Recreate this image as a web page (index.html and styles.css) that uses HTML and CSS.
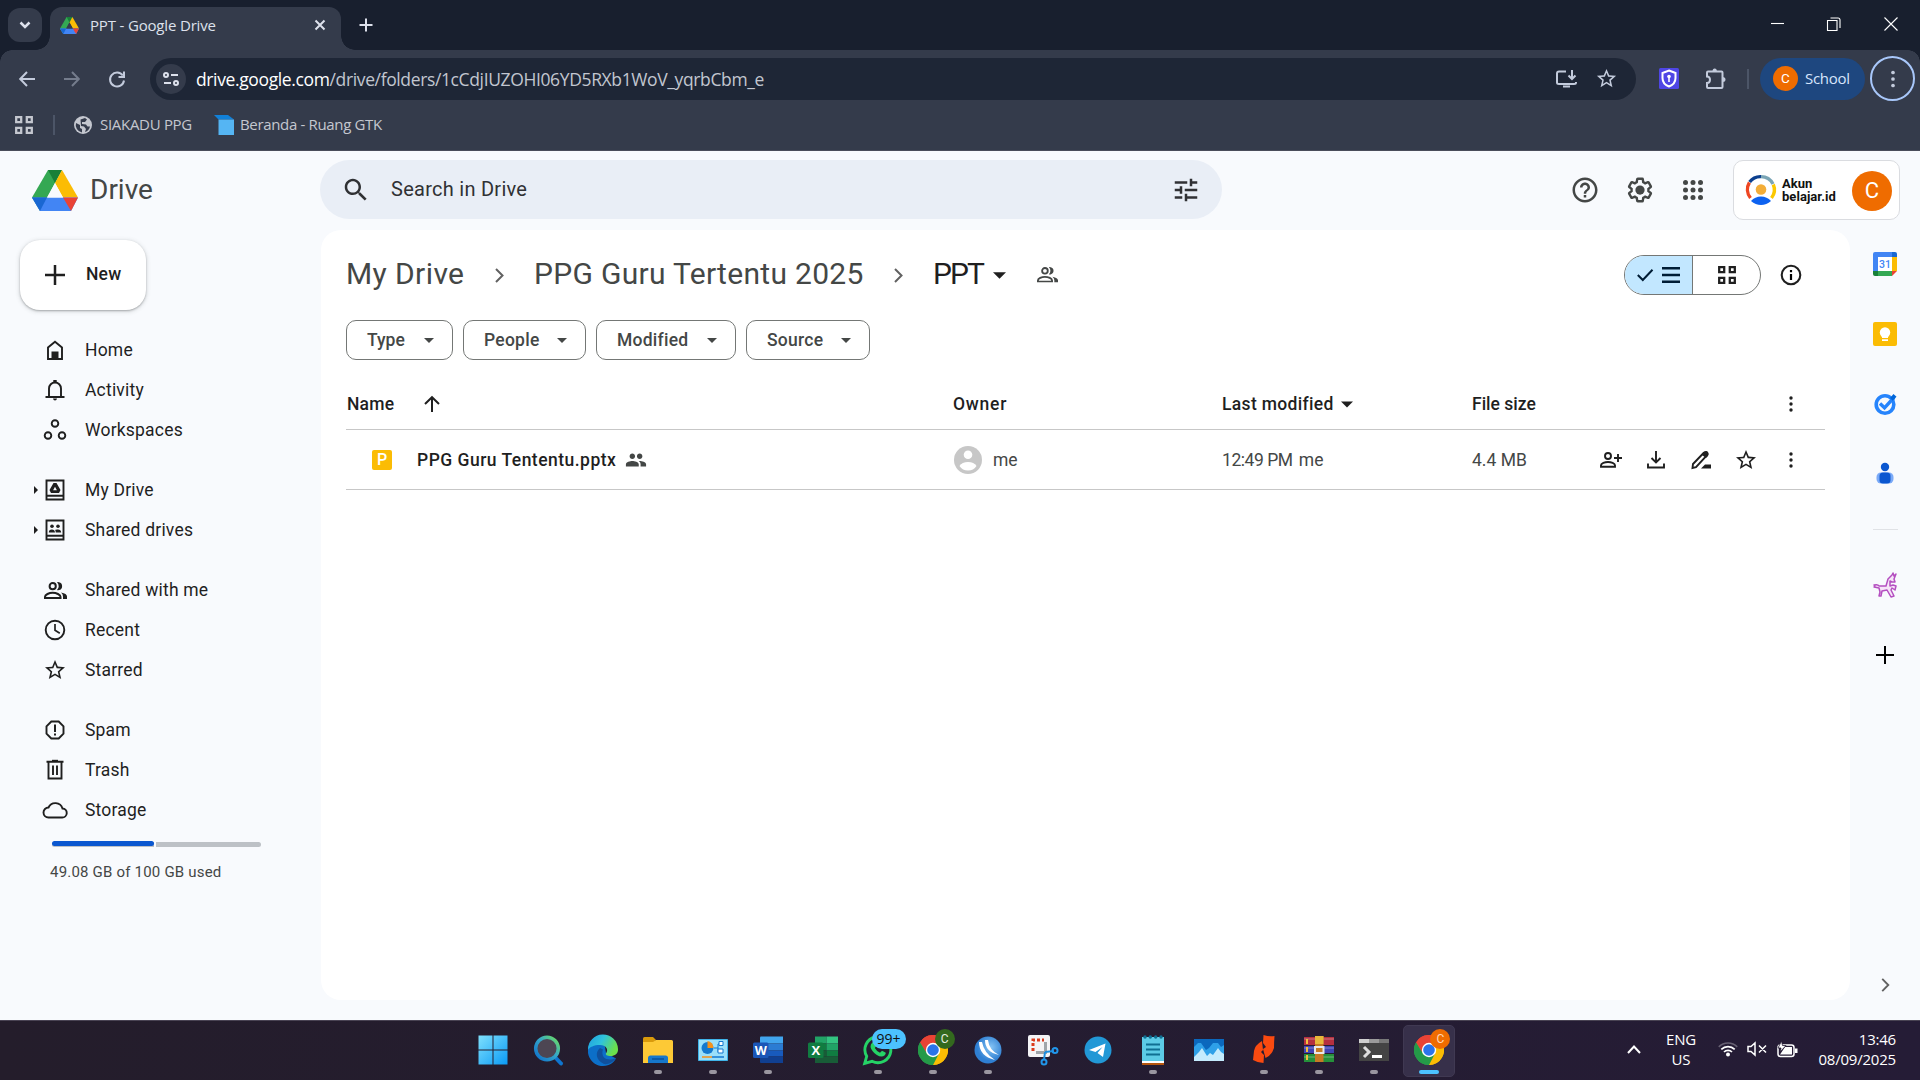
FILE: index.html
```html
<!DOCTYPE html>
<html lang="en">
<head>
<meta charset="utf-8">
<title>PPT - Google Drive</title>
<link rel="stylesheet" href="styles.css">
</head>
<body>
<svg class="defs" aria-hidden="true">
  <symbol id="drive" viewBox="0 0 46 41">
    <path d="M16 0h14L8 41 0 27.500z" fill="#34a853"/>
    <path d="M16 0h14l-7 13z" fill="#188038"/>
    <path d="M30 0l16 27.500H31L23 13z" fill="#fbbc04"/>
    <path d="M0 27.500h46L39 41H8z" fill="#4285f4"/>
    <path d="M0 27.500h15L8 41z" fill="#1967d2"/>
    <path d="M31 27.500h15L39 41z" fill="#ea4335"/>
    <path d="M23 13l8 14.500H15z" fill="var(--hole)"/>
  </symbol>
  <symbol id="star" viewBox="0 0 24 24"><path d="M22 9.240l-7.190-.62L12 2 9.190 8.630 2 9.240l5.460 4.730L5.820 21 12 17.270 18.180 21l-1.630-7.030L22 9.240zM12 15.400l-3.760 2.270 1-4.280-3.320-2.880 4.380-.38L12 6.100l1.710 4.040 4.380.38-3.320 2.880 1 4.280L12 15.400z"/></symbol>
  <symbol id="people" viewBox="0 0 23 17"><g fill="none" stroke="currentColor" stroke-width="2"><circle cx="8.700" cy="4.200" r="3.100"/><path d="M1 16v-1.300c0-2 4-3.900 7.700-3.900s7.800 1.900 7.800 3.900V16z"/></g><path d="M13 .3q1-.4 2 0a4 4 0 0 1 0 7.800q-1 .3-2-.1 1.700-1.500 1.700-3.800T13 .3zM17 10.600q6 1.200 6 4V17h-4v-2.600q0-2-2-3.800z" fill="currentColor"/></symbol>
  <symbol id="people-fill" viewBox="0 0 24 24"><path d="M16 11c1.660 0 2.990-1.340 2.990-3S17.660 5 16 5c-1.660 0-3 1.340-3 3s1.340 3 3 3zm-8 0c1.660 0 2.990-1.340 2.990-3S9.660 5 8 5C6.340 5 5 6.340 5 8s1.340 3 3 3zm0 2c-2.330 0-7 1.170-7 3.500V19h14v-2.500c0-2.330-4.670-3.500-7-3.500zm8 0c-.29 0-.62.02-.97.05 1.160.84 1.970 1.970 1.970 3.450V19h6v-2.500c0-2.330-4.670-3.500-7-3.500z"/></symbol>
  <symbol id="dots" viewBox="0 0 24 24"><circle cx="12" cy="6" r="1.700"/><circle cx="12" cy="12" r="1.700"/><circle cx="12" cy="18" r="1.700"/></symbol>
  <symbol id="grid" viewBox="0 0 18 18"><g fill="none" stroke="currentColor" stroke-width="2.300"><path d="M1.200 1.200h5v5h-5zM11.800 1.200h5v5h-5zM1.200 11.800h5v5h-5zM11.800 11.800h5v5h-5z"/></g></symbol>
  <symbol id="caret" viewBox="0 0 10 5"><path d="M0 0h10L5 5z"/></symbol>
  <symbol id="chrome" viewBox="0 0 30 30">
    <path d="M15 15L2 7.500A15 15 0 0 1 28 7.500z" fill="#ea4335"/>
    <path d="M15 15L28 7.500A15 15 0 0 1 15 30z" fill="#fbbc04"/>
    <path d="M15 15V30A15 15 0 0 1 2 7.500z" fill="#34a853"/>
    <path d="M15 8H28.300A15 15 0 0 1 15 30l6-11z" fill="#fbbc04"/>
    <path d="M2 7.500A15 15 0 0 1 28.300 8H15l-7 9z" fill="#ea4335"/>
    <path d="M2 7.500l7 12 12-1-6 11.500A15 15 0 0 1 2 7.500z" fill="#249a48"/>
    <circle cx="15" cy="15" r="7.200" fill="#fff"/><circle cx="15" cy="15" r="5.800" fill="#2b74ea"/>
  </symbol>
</svg>

<div class="tabstrip">
  <div class="tab-search"><svg width="12" height="8" viewBox="0 0 12 8" class="ln w25"><path d="M1.500 1.500L6 6l4.500-4.500"/></svg></div>
  <div class="tab">
    <svg class="tab-logo"><use href="#drive"/></svg>
    <span class="tab-title">PPT - Google Drive</span>
    <svg class="ln w2 tab-x" width="12" height="12" viewBox="0 0 12 12"><path d="M1.500 1.500l9 9M10.500 1.500l-9 9"/></svg>
  </div>
  <svg class="ln w2 newtab" width="14" height="14" viewBox="0 0 14 14"><path d="M7 .5v13M.5 7h13"/></svg>
  <div class="winbtns">
    <svg width="14" height="14" viewBox="0 0 14 14"><path d="M1 6.500h13"/></svg>
    <svg width="14" height="14" viewBox="0 0 14 14"><path d="M.5 3.500h9.500v10h-9.500zM3.500 1h7.500q2 0 2 2v8"/></svg>
    <svg width="14" height="14" viewBox="0 0 14 14"><path d="M.5.5l13 13M13.500.5l-13 13"/></svg>
  </div>
</div>

<div class="toolbar">
  <div class="nav">
    <svg class="ln w2" width="16" height="16" viewBox="0 0 16 16"><path d="M16 8H1.500M8 1L1.200 8 8 15"/></svg>
    <svg class="ln w2 off" width="16" height="16" viewBox="0 0 16 16"><path d="M0 8h14.500M8 1l6.800 7L8 15"/></svg>
    <svg class="ln w2" width="16" height="16" viewBox="0 0 16 16"><path d="M13.800 4.500A7 7 0 1 0 15 9.500M15 .5v5.500H9.500"/></svg>
  </div>
  <div class="omnibox">
    <div class="siteinfo"><svg class="ln w2" width="16" height="14" viewBox="0 0 16 14"><circle cx="3" cy="3" r="2"/><path d="M8 3h7M1 11h7"/><circle cx="13" cy="11" r="2"/></svg></div>
    <div class="url"><b>drive.google.com</b>/drive/folders/1cCdjIUZOHI06YD5RXb1WoV_yqrbCbm_e</div>
    <svg class="ln w2 install" width="21" height="18" viewBox="0 0 21 18"><path d="M10 1.500H3q-2 0-2 2v9q0 1.500 2 1.500h15q2 0 2-1.500V12M16 0v8M12.500 5.500L16 9l3.500-3.500M7 16.500h7"/></svg>
    <svg class="fl omnistar" width="23" height="23"><use href="#star"/></svg>
  </div>
  <svg class="shield" width="20" height="21" viewBox="0 0 20 21"><rect width="20" height="21" rx="1.500" fill="#4f46e5"/><path d="M10 2.500L16.500 5v5c0 4-2.500 7-6.500 8.500C6 17 3.500 14 3.500 10V5z" fill="#4f46e5" stroke="#fff" stroke-width="2"/><circle cx="10" cy="8.500" r="1.800" fill="#fff"/><path d="M9.200 9h1.600v5H9.200z" fill="#fff"/></svg>
  <svg class="ln w2 puzzle" width="21" height="21" viewBox="0 0 21 21"><path d="M3 3.500h13.500q1 0 1 1V19q0 1-1 1H3q-1 0-1-1v-4q3 0 3-3.200T2 8.500V4.500q0-1 1-1z"/><path d="M7.500 3.500q0-3 2.200-3t2.200 3zM17.500 9q3 0 3 2.500t-3 2.500z" fill="currentColor" stroke="none"/></svg>
  <i class="vsep"></i>
  <div class="profile"><span class="pic">C</span><span>School</span></div>
  <div class="menu"><svg class="fl" width="26" height="26"><use href="#dots"/></svg></div>
</div>

<div class="bookmarks">
  <svg class="bm-grid" width="18" height="18"><use href="#grid"/></svg>
  <i class="vsep"></i>
  <svg class="globe" width="18" height="18" viewBox="0 0 18 18"><circle cx="9" cy="9" r="9" fill="#c4c7cf"/><path d="M2 7l4 2v3l2 1v3.500A7.500 7.500 0 0 1 2 7zM6.500 3.500L11 2l2 1.500-2 2.500H8v2l4 .5 1.500 2H16A7.500 7.500 0 0 1 11 16l1-3-2-2.500-3-.5z" fill="#343b4b"/></svg>
  <span class="bm1">SIAKADU PPG</span>
  <svg class="ruang" width="20" height="20" viewBox="0 0 20 20"><path d="M0 0h14l6 4.500H4.500z" fill="#1180d8"/><path d="M4.500 4.500H20V20H4.500z" fill="#55b5f3"/></svg>
  <span class="bm2">Beranda - Ruang GTK</span>
</div>

<div class="app">
  <header class="apphead">
    <div class="brand"><svg width="46" height="41"><use href="#drive"/></svg><span>Drive</span></div>
    <div class="search">
      <svg class="fl" width="30" height="30" viewBox="0 0 24 24"><path d="M15.500 14h-.79l-.28-.27C15.410 12.590 16 11.110 16 9.500 16 5.910 13.090 3 9.500 3S3 5.910 3 9.500 5.910 16 9.500 16c1.610 0 3.090-.59 4.230-1.570l.27.28v.79l5 4.990L20.490 19l-4.990-5zm-6 0C7.010 14 5 11.990 5 9.500S7.010 5 9.500 5 14 7.010 14 9.500 11.990 14 9.500 14z"/></svg>
      <span>Search in Drive</span>
      <svg class="fl" width="30" height="30" viewBox="0 0 24 24"><path d="M3 17v2h6v-2H3zM3 5v2h10V5H3zm10 16v-2h8v-2h-8v-2h-2v6h2zM7 9v2H3v2h4v2h2V9H7zm14 4v-2H11v2h10zm-6-4h2V7h4V5h-4V3h-2v6z"/></svg>
    </div>
    <svg class="fl help" width="30" height="30" viewBox="0 0 24 24"><path d="M11 18h2v-2h-2v2zm1-16C6.480 2 2 6.480 2 12s4.480 10 10 10 10-4.480 10-10S17.520 2 12 2zm0 18c-4.410 0-8-3.590-8-8s3.590-8 8-8 8 3.590 8 8-3.590 8-8 8zm0-14c-2.210 0-4 1.790-4 4h2c0-1.100.9-2 2-2s2 .9 2 2c0 2-3 1.750-3 5h2c0-2.250 3-2.500 3-5 0-2.210-1.790-4-4-4z"/></svg>
    <svg class="gear" width="30" height="30" viewBox="0 0 24 24"><path transform="translate(1.200 1.200) scale(.9)" fill="none" stroke="currentColor" stroke-width="2.100" d="M19.430 12.980c.04-.32.07-.64.07-.98 0-.34-.03-.66-.07-.98l2.110-1.650c.19-.15.24-.42.12-.64l-2-3.460c-.09-.16-.26-.25-.44-.25l-.17.03-2.490 1c-.52-.4-1.080-.73-1.690-.98l-.38-2.650C14.460 2.180 14.250 2 14 2h-4c-.25 0-.46.18-.49.42l-.38 2.650c-.61.25-1.170.59-1.690.98l-2.490-1-.18-.03c-.17 0-.34.09-.43.25l-2 3.460c-.13.22-.07.49.12.64l2.110 1.650c-.04.32-.07.65-.07.98 0 .33.03.66.07.98l-2.110 1.650c-.19.15-.24.42-.12.64l2 3.460c.09.16.26.25.44.25l.17-.03 2.490-1c.52.4 1.080.73 1.690.98l.38 2.650c.03.24.24.42.49.42h4c.25 0 .46-.18.49-.42l.38-2.650c.61-.25 1.170-.59 1.690-.98l2.490 1 .18.03c.17 0 .34-.09.43-.25l2-3.460c.12-.22.07-.49-.12-.64z"/><circle cx="12" cy="12" r="3.700" fill="currentColor"/></svg>
    <svg class="fl" width="20" height="20" viewBox="0 0 20 20"><g><circle cx="2.500" cy="2.500" r="2.500"/><circle cx="10" cy="2.500" r="2.500"/><circle cx="17.500" cy="2.500" r="2.500"/><circle cx="2.500" cy="10" r="2.500"/><circle cx="10" cy="10" r="2.500"/><circle cx="17.500" cy="10" r="2.500"/><circle cx="2.500" cy="17.500" r="2.500"/><circle cx="10" cy="17.500" r="2.500"/><circle cx="17.500" cy="17.500" r="2.500"/></g></svg>
    <div class="account">
      <svg width="30" height="30" viewBox="0 0 30 30"><g fill="none" stroke-width="3.400"><path d="M3.600 7A13.500 13.500 0 0 1 15 1.600" stroke="#0b3f8f"/><path d="M15 1.600A13.500 13.500 0 0 1 27 9" stroke="#7aa5b5"/><path d="M27.300 9.500A13.500 13.500 0 0 1 25.500 23" stroke="#fcc800"/><path d="M3.400 7.500A13.500 13.500 0 0 0 4.500 23" stroke="#ee4622"/></g><circle cx="15" cy="14.500" r="5.300" fill="#f3ad38"/><path d="M5 26q4-4.500 10-4.500T25 26q-4.500 4-10 4T5 26z" fill="#0d62f0"/></svg>
      <div class="acct">Akun<br>belajar.id</div>
      <span class="avatar">C</span>
    </div>
  </header>

  <div class="body">
    <nav class="side">
      <div class="new"><svg class="ln w25" width="20" height="20" viewBox="0 0 20 20"><path d="M10 0v20M0 10h20"/></svg><span>New</span></div>
      <div class="grp">
        <div class="it"><i></i><svg viewBox="0 0 24 24"><path class="s" d="M5 21V9.500l7-5.700 7 5.700V21z"/><path class="f" d="M8.500 13.500h7V21h-7z"/></svg><span>Home</span></div>
        <div class="it"><i></i><svg viewBox="0 0 24 24"><path class="s" d="M2.500 19h19M6 19v-8.500a6 6 0 0 1 12 0V19"/><path class="f" d="M10.300 2h3.400v3h-3.400zM10 20.500h4q-.3 2-2 2t-2-2z"/></svg><span>Activity</span></div>
        <div class="it"><i></i><svg viewBox="0 0 24 24"><g class="s"><circle cx="12" cy="5.500" r="3.300"/><circle cx="5" cy="17.500" r="3.300"/><circle cx="19" cy="17.500" r="3.300"/></g></svg><span>Workspaces</span></div>
      </div>
      <div class="grp">
        <div class="it"><i class="tri"></i><svg viewBox="0 0 24 24"><path class="s" d="M3.500 2.500h17V21.500h-17zM3.500 17.800h17"/><path class="f" fill-rule="evenodd" d="M10.500 5h3l4 7-1.500 3H8l-1.500-3zM12 8.800l-1.900 3.400h3.800z"/></svg><span>My Drive</span></div>
        <div class="it"><i class="tri"></i><svg viewBox="0 0 24 24"><path class="s" d="M3.500 2.500h17V21.500h-17zM3.500 17.800h17"/><path class="f" d="M5.800 14.500q0-3 3-3t3.200 3zM12.700 14.500q0-3-.9-2.500 1.500-.8 3.200-.5 3 0 3.200 3z"/><circle cx="9" cy="8.200" r="1.800"/><circle cx="15" cy="8.200" r="1.800"/></svg><span>Shared drives</span></div>
      </div>
      <div class="grp">
        <div class="it"><i></i><svg class="ppl"><use href="#people"/></svg><span>Shared with me</span></div>
        <div class="it"><i></i><svg viewBox="0 0 24 24"><circle class="s" cx="12" cy="12" r="9.300"/><path d="M12 6v6.300l4.800 3" fill="none" stroke="currentColor" stroke-width="1.700"/></svg><span>Recent</span></div>
        <div class="it"><i></i><svg><use href="#star"/></svg><span>Starred</span></div>
      </div>
      <div class="grp">
        <div class="it"><i></i><svg viewBox="0 0 24 24"><path class="s" d="M8.300 3.500h7.400L20.500 8.300v7.400L15.700 20.500H8.300L3.500 15.700V8.300z"/><path class="f" d="M11 6.500h2v7.500h-2zM11 15.500h2v2h-2z"/></svg><span>Spam</span></div>
        <div class="it"><i></i><svg viewBox="0 0 24 24"><path class="s" d="M5.500 4v16.500h13V4M3.500 3.800h17M10 7.500v9.500M14 7.500v9.500"/><path class="f" d="M9 1.800h6v2H9z"/></svg><span>Trash</span></div>
        <div class="it"><i></i><svg viewBox="0 0 24 24"><path class="s" d="M5.500 19.500h13.500a4.500 4.500 0 0 0 .5-9 7.500 7.500 0 0 0-14-1A5 5 0 0 0 5.500 19.500z"/></svg><span>Storage</span></div>
      </div>
      <div class="meter"><b></b></div>
      <div class="quota">49.08 GB of 100 GB used</div>
    </nav>

    <main class="panel">
      <div class="crumbs">
        <span class="c1">My Drive</span>
        <svg class="chev" width="9" height="15" viewBox="0 0 9 15"><path d="M1 1l6.500 6.500L1 14"/></svg>
        <span class="c2">PPG Guru Tertentu 2025</span>
        <svg class="chev" width="9" height="15" viewBox="0 0 9 15"><path d="M1 1l6.500 6.500L1 14"/></svg>
        <span class="c3">PPT</span>
        <svg class="fl c-caret" width="13" height="7"><use href="#caret"/></svg>
        <svg class="c-people" width="21" height="15.500"><use href="#people"/></svg>
        <div class="toggle">
          <div class="on"><svg class="ln w2" width="16" height="12" viewBox="0 0 16 12"><path d="M.8 6l5 5L15.500.8"/></svg><svg class="ln w25" width="18" height="16" viewBox="0 0 18 16"><path d="M0 1.200h18M0 8h18M0 14.800h18"/></svg></div>
          <div><svg width="18" height="18"><use href="#grid"/></svg></div>
        </div>
        <svg class="info" width="22" height="22" viewBox="0 0 22 22"><circle cx="11" cy="11" r="9.300" fill="none" stroke="currentColor" stroke-width="2.100"/><path d="M9.900 10h2.200v6H9.900zM9.900 6h2.200v2.200H9.900z"/></svg>
      </div>

      <div class="chips">
        <div class="chip k1"><span>Type</span><svg class="fl" width="10" height="5"><use href="#caret"/></svg></div>
        <div class="chip k2"><span>People</span><svg class="fl" width="10" height="5"><use href="#caret"/></svg></div>
        <div class="chip k3"><span>Modified</span><svg class="fl" width="10" height="5"><use href="#caret"/></svg></div>
        <div class="chip k4"><span>Source</span><svg class="fl" width="10" height="5"><use href="#caret"/></svg></div>
      </div>

      <div class="row head">
        <div class="name"><span>Name</span><svg class="ln w2" width="16" height="16" viewBox="0 0 16 16"><path d="M8 16V1.500M1 8l7-6.800L15 8"/></svg></div>
        <div class="ow">Owner</div>
        <div class="lm"><span>Last modified</span><svg class="fl" width="12" height="7"><use href="#caret"/></svg></div>
        <div>File size</div>
        <div class="acts"><svg><use href="#dots"/></svg></div>
      </div>
      <div class="row file">
        <div class="fname"><span class="ppt">P</span><span class="title">PPG Guru Tententu.pptx</span><svg class="fl" width="22" height="22"><use href="#people-fill"/></svg></div>
        <div class="owner"><svg width="28" height="28" viewBox="0 0 28 28"><circle cx="14" cy="14" r="14" fill="#c7c7c7"/><circle cx="14" cy="8.700" r="4.300" fill="#fff"/><path d="M5.500 20q2.500-4 8.500-4t8.500 4q-3 4.500-8.500 4.500T5.500 20z" fill="#fff"/></svg><span>me</span></div>
        <div class="when"><span>12:49 PM</span><span>me</span></div>
        <div class="size">4.4 MB</div>
        <div class="acts">
          <svg viewBox="0 0 24 24"><circle cx="9" cy="8" r="3" class="s"/><path class="s" d="M2 18.800v-1.500c0-2 4-3.300 7-3.300s7 1.300 7 3.300v1.500zM19 6v8M15 10h8"/></svg>
          <svg viewBox="0 0 24 24"><path class="s" d="M12 3v11M7.500 10l4.500 4.500 4.500-4.500M4 15.500V19.500h16V15.500"/></svg>
          <svg viewBox="0 0 24 24"><path class="s" d="M3.500 20l.5-4L14.800 4.800q1.400-1.200 2.800 0t0 2.800L7 19.200z"/><path class="f" d="M13 7l2-3q2.500-2 4 0t0 4l-2 2zM12 20.500l4-4h6v4z"/></svg>
          <svg viewBox="0 0 24 24"><use href="#star"/></svg>
          <svg><use href="#dots"/></svg>
        </div>
      </div>
    </main>

    <aside class="rail">
      <svg width="24" height="24" viewBox="0 0 24 24"><path d="M2 0h17v5H5v14H0V2q0-2 2-2z" fill="#4285f4"/><path d="M19 0h3q2 0 2 2v3h-5z" fill="#1967d2"/><path d="M19 5h5v14h-5z" fill="#fbbc04"/><path d="M5 19h14v5H5z" fill="#34a853"/><path d="M0 19h5v5H2q-2 0-2-2z" fill="#188038"/><path d="M19 19h5l-5 5z" fill="#ea4335"/><path d="M5 5h14v14H5z" fill="#fff"/><text x="12" y="16" text-anchor="middle" font-size="10.500" font-weight="500" fill="#4285f4">31</text></svg>
      <svg width="24" height="24" viewBox="0 0 24 24"><rect width="24" height="24" rx="2" fill="#fbbc04"/><circle cx="12" cy="10.500" r="5.200" fill="#fff"/><path d="M9 13h6v3H9zM9 17.200h6V19H9z" fill="#fff"/></svg>
      <svg width="24" height="24" viewBox="0 0 24 24"><circle cx="12" cy="12.500" r="8.800" fill="none" stroke="#2684fc" stroke-width="3.600"/><path d="M7 11.500l4.500 4.300L21 5.500" fill="none" stroke="#2684fc" stroke-width="3.400"/><path d="M17 6l3.500-4 3 2.800-3.800 4z" fill="#0066da"/></svg>
      <svg width="24" height="24" viewBox="0 0 24 24"><circle cx="12" cy="5" r="4.200" fill="#0b57d0"/><rect x="3.500" y="10.500" width="17" height="11" rx="4.500" fill="#7baaf7"/><rect x="6.500" y="10.500" width="11" height="11" rx="3.500" fill="#0b57d0"/></svg>
      <i></i>
      <svg width="26" height="26" viewBox="0 0 26 26"><path d="M2 13q4-1 5 1h7l2-7 4-4 1-2 1 3 2-2-2 5 1 3-3 0-2-1 0 5 3-1 3 1-1 4-3-2-1 2 3 6-3 1-4-7-5 1-1 5H7l1-4-1-4-5-1 1-1z" fill="#f6e4f8" stroke="#b44fc0" stroke-width="1.500" stroke-linejoin="round"/></svg>
      <svg class="ln w2" width="18" height="18" viewBox="0 0 18 18"><path d="M9 0v18M0 9h18"/></svg>
      <svg class="chev last" width="9" height="14" viewBox="0 0 9 15"><path d="M1 1l6.500 6.500L1 14"/></svg>
    </aside>
  </div>
</div>

<footer class="taskbar">
  <div class="apps">
    <div class="t"><svg viewBox="0 0 30 30"><defs><linearGradient id="w" x1="0" y1="0" x2="1" y2="1"><stop offset="0" stop-color="#7fe0fc"/><stop offset="1" stop-color="#0a9af5"/></linearGradient></defs><path d="M.5.5h14v14h-14zM15.500.5h14v14h-14zM.5 15.500h14v14h-14zM15.500 15.500h14v14h-14z" fill="url(#w)"/></svg></div>
    <div class="t"><svg viewBox="0 0 30 30"><defs><linearGradient id="m" x1="1" y1="0" x2="0" y2="1"><stop offset="0" stop-color="#6fe05a"/><stop offset=".45" stop-color="#35a7c9"/><stop offset="1" stop-color="#0d6fcb"/></linearGradient></defs><path d="M21 21l7 7.500" stroke="#0f75cf" stroke-width="4" stroke-linecap="round"/><circle cx="14" cy="13.500" r="11.300" fill="#4d4653" stroke="url(#m)" stroke-width="3.500"/></svg></div>
    <div class="t"><svg viewBox="0 0 30 30"><defs><linearGradient id="e" x1="0" y1="0" x2="1" y2=".4"><stop offset="0" stop-color="#1f9fe0"/><stop offset=".5" stop-color="#2fc3dc"/><stop offset="1" stop-color="#6be04c"/></linearGradient></defs><path d="M0 15A15 15 0 0 1 15 0l3 18 10 5.500A15 15 0 0 1 0 15z" fill="#0c6fc8"/><path d="M0 15A15 15 0 0 1 30 14c.5 5-4 7.500-8.500 7-3.500-.3-4.500-1.800-3-3.500 2-3-.5-7.500-6.500-7.500C6 10 1.500 12 0 15z" fill="url(#e)"/><path d="M12 13c-5 4-4.500 12 4 16 4 .8 9-1.500 12-6-5 2.500-10 1.500-12-.5-2-2-2-6-1-8z" fill="#10509c"/></svg></div>
    <div class="t run"><svg viewBox="0 0 30 30"><path d="M0 3.500q0-1.500 1.500-1.500H10l3 3-2 3H0z" fill="#d99a0b"/><path d="M0 7h10l3-2h15.500Q30 5 30 6.500V28H0z" fill="#fdc936"/><path d="M5 28v-5q0-2.500 2.500-2.500h15q2.500 0 2.500 2.500v5z" fill="#1677cb"/><path d="M9 24h12" stroke="#0a4f9a" stroke-width="1.500"/></svg></div>
    <div class="t run"><svg viewBox="0 0 30 30"><path d="M.5 4.500h29v21H.5z" fill="#9be0fa" stroke="#3fb3e8"/><circle cx="9.500" cy="13" r="6" fill="#1479cf"/><path d="M9.500 13V6a7 7 0 0 1 6 7z" fill="#f5921b"/><path d="M16 13h4V9h4M20 13v4h3" fill="none" stroke="#1479cf"/><path d="M21 6.500h4v4h-4zM20 14h5v4h-5z" fill="#fff" stroke="#1479cf"/><path d="M4 22h10" stroke="#f5921b" stroke-width="1.500"/><path d="M14 22h12" stroke="#1479cf" stroke-width="1.500"/></svg></div>
    <div class="t run"><svg viewBox="0 0 30 30"><path d="M7 2.500Q7 1.500 8 1.500h22v7H7z" fill="#41a5ee"/><path d="M7 8.500h23v7H7z" fill="#2b7cd3"/><path d="M7 15.500h23v6H7z" fill="#185abd"/><path d="M7 21.500h23v6.500H8q-1 0-1-1z" fill="#103f91"/><rect y="7.500" width="15.500" height="15.500" rx="1.500" fill="#1a56b7"/><text x="7.800" y="20" text-anchor="middle" font-size="12.500" font-weight="700" fill="#fff">W</text></svg></div>
    <div class="t"><svg viewBox="0 0 30 30"><path d="M7 1.500h11.500v7H7z" fill="#21a366"/><path d="M18.500 1.500H30v7H18.500z" fill="#33c481"/><path d="M7 8.500h11.500v7H7z" fill="#107c41"/><path d="M18.500 8.500H30v7H18.500z" fill="#21a366"/><path d="M7 15.500h11.500v6H7z" fill="#185c37"/><path d="M18.500 15.500H30v6H18.500z" fill="#107c41"/><path d="M7 21.500h23V28H7z" fill="#185c37"/><rect y="7.500" width="15.500" height="15.500" rx="1.500" fill="#107c41"/><text x="7.800" y="20" text-anchor="middle" font-size="13" font-weight="700" fill="#fff">X</text></svg></div>
    <div class="t run"><svg viewBox="0 0 30 30"><path d="M1.700 28.300l2-7A13 13 0 1 1 9 26.300z" fill="none" stroke="#25d366" stroke-width="2.900"/><path d="M9 8q2-2 3 0l1.300 3-1.500 2q2 3.500 5.200 4.800l2-2 3.500 1.700q1 1-1 3-3 2.500-8-.8T7.500 12q0-3 1.500-4z" fill="#25d366"/></svg><span class="badge count">99+</span></div>
    <div class="t run"><svg><use href="#chrome"/></svg><span class="badge cg">C</span></div>
    <div class="t run"><svg viewBox="0 0 30 30"><defs><radialGradient id="r" cx=".6" cy=".4"><stop offset="0" stop-color="#86c5f5"/><stop offset="1" stop-color="#2f7fd2"/></radialGradient></defs><circle cx="15" cy="15" r="13.500" fill="url(#r)"/><path d="M6 7q0 14 16 18-11-7-13-18zM12 5q0 12 14 15-10-5-11-15z" fill="#fff"/></svg></div>
    <div class="t"><svg viewBox="0 0 30 30"><rect x="0" y="0" width="22" height="22" rx="2" fill="#f4f4f6"/><path d="M5 16V5h11" fill="none" stroke="#db3b1c" stroke-width="3" stroke-dasharray="3 2"/><path d="M8 17.500h9.500V7" fill="none" stroke="#a0a5aa" stroke-width="3"/><path d="M17 17l9-1M17 17l-1 8" stroke="#1c8ee0" stroke-width="2"/><circle cx="27" cy="15.500" r="2.500" fill="none" stroke="#2196ea" stroke-width="2"/><circle cx="16" cy="27" r="2.500" fill="none" stroke="#2196ea" stroke-width="2"/></svg></div>
    <div class="t"><svg viewBox="0 0 30 30"><circle cx="15" cy="15" r="13.500" fill="#2298d6"/><path d="M6 15L22.500 8.500 20 22l-5.500-4 5-6-7 5z" fill="#fff"/></svg></div>
    <div class="t run"><svg viewBox="0 0 30 30"><path d="M4 2h22v25H4z" fill="#5ccbe6"/><path d="M4 26h22v2H4z" fill="#fff"/><path d="M4 28h22v2H4z" fill="#b5560e"/><g fill="#0f6f92"><circle cx="7" cy="2" r="1.700"/><circle cx="12.300" cy="2" r="1.700"/><circle cx="17.700" cy="2" r="1.700"/><circle cx="23" cy="2" r="1.700"/></g><path d="M8 9.500h14M8 14.500h14M8 19.500h14" stroke="#0f6f92" stroke-width="1.800"/></svg></div>
    <div class="t"><svg viewBox="0 0 30 30"><path d="M0 4h30v22H0z" fill="#0b68bd"/><path d="M0 12l4-4h3l5 7 3-2 4-5h5l3 4 3-2v16H0z" fill="#2ea0e8"/><path d="M0 22l5-5 3-4 5 8 3-3 3 2 5-7 3 4 3 2v7H0z" fill="#c4ebfd"/></svg></div>
    <div class="t run"><svg viewBox="0 0 30 30"><path d="M14.500 0q6 2 11 1-.5 6-.5 12-2 7-8.500 10L14 14l3-2-3-4zM13 6q-7 4-8 10l-1 9q5 3 10.500 3L15 20l-3-3 2-2z" fill="#fa4a10"/></svg></div>
    <div class="t run"><svg viewBox="0 0 30 30"><path d="M0 2h30v8H0z" fill="#b5303f"/><path d="M0 11h30v7H0z" fill="#3f44b4"/><path d="M0 19h30v8H0z" fill="#24903a"/><path d="M0 4h30M0 13h30M0 22h30" stroke="#fff" stroke-opacity=".35"/><path d="M3 4v22" stroke="#f0c040" stroke-width="2" stroke-dasharray="5 3"/><path d="M11 1h8.500v26H11z" fill="#c67a25"/><path d="M11 1h8.500v8H11z" fill="#e7b83a"/><rect x="11" y="12" width="8.500" height="6" fill="none" stroke="#e8e8e8" stroke-width="2"/></svg></div>
    <div class="t run"><svg viewBox="0 0 30 30"><path d="M0 4h30v22H0z" fill="#444"/><path d="M0 4h10v4H0z" fill="#d0d0d0"/><path d="M10 4h10v4H10z" fill="#9b9b9b"/><path d="M20 4h10v4H20z" fill="#777"/><path d="M5 12l5 5-5 5" fill="none" stroke="#ddd" stroke-width="3"/><path d="M13 21.500h10" stroke="#fff" stroke-width="3"/></svg></div>
    <div class="t run act"><svg><use href="#chrome"/></svg><span class="badge co">C</span></div>
  </div>
  <div class="tray">
    <svg class="ln w2 up" width="14" height="9" viewBox="0 0 14 9"><path d="M1 8l6-6.500L13 8"/></svg>
    <div class="lang">ENG<br>US</div>
    <svg class="wifi" width="20" height="16" viewBox="0 0 20 16"><g fill="none" stroke="#fff" stroke-width="1.700"><path d="M.8 5.800a13 13 0 0 1 18.400 0" opacity=".3"/><path d="M3.300 8.300a9.500 9.500 0 0 1 13.400 0M6 11a5.600 5.600 0 0 1 8 0"/></g><circle cx="10" cy="13.500" r="2" fill="#fff"/></svg>
    <svg class="vol" width="20" height="14" viewBox="0 0 20 14"><path d="M1 4.500v5h3l4 3.500V1L4 4.500zM12 3.500l7 7M19 3.500l-7 7" fill="none" stroke="#fff" stroke-width="1.500"/></svg>
    <svg class="bat" width="21" height="17" viewBox="0 0 21 17"><rect x="1" y="4" width="16" height="11.500" rx="2.500" fill="none" stroke="#fff" stroke-width="1.500"/><path d="M3 13.500l5-7.500h7v7.500zM18 7.500h2.500v4.500H18z" fill="#fff"/><path d="M4.500 0L1 7h3l-1 4 6-6.500H5.500z" fill="#fff" stroke="#241c34" stroke-width=".8"/></svg>
    <div class="clock">13:46<br>08/09/2025</div>
  </div>
</footer>
</body>
</html>
```
FILE: styles.css
```css
* { box-sizing: border-box; }
html, body { margin: 0; }
body {
  width: 1920px; height: 1080px; overflow: hidden;
  display: flex; flex-direction: column;
  font-family: Roboto, "Liberation Sans", sans-serif;
  color: #1f1f1f; background: #f8fafd;
}
svg { display: block; flex: none; overflow: visible; }
span, div { white-space: nowrap; }
.defs { position: absolute; width: 0; height: 0; }
.ln { fill: none; stroke: currentColor; }
.w2 { stroke-width: 2; }
.w25 { stroke-width: 2.500; }
.fl { fill: currentColor; }

/* browser chrome */
.tabstrip, .toolbar, .bookmarks, .taskbar { font-family: "Open Sans", "Noto Sans", sans-serif; flex: none; }
.tabstrip { height: 50px; background: #181f2e; display: flex; align-items: flex-start; color: #dde1ec; }
.tab-search { margin: 8px 8px 0; width: 34px; height: 34px; border-radius: 12px; background: #343b4b; display: flex; align-items: center; justify-content: center; }
.tab { position: relative; width: 291px; height: 43px; margin-top: 7px; padding: 0 15px 7px 10px; border-radius: 12px 12px 0 0; background: #343b4b; display: flex; align-items: center; }
.tab::before, .tab::after { content: ""; position: absolute; bottom: 0; width: 14px; height: 14px; }
.tab::before { left: -14px; background: radial-gradient(circle at 0 0, transparent 13.500px, #343b4b 14px); }
.tab::after { right: -14px; background: radial-gradient(circle at 100% 0, transparent 13.500px, #343b4b 14px); }
.tab-logo { width: 19px; height: 17px; --hole: #343b4b; margin-right: 11px; }
.tab-title { font-size: 15px; letter-spacing: -.17px; margin-right: auto; }
.newtab { margin: 18px 0 0 18px; }
.winbtns { margin: 17px 22px 0 auto; display: flex; gap: 43px; }
.winbtns svg { fill: none; stroke: #fff; stroke-width: 1.100; }
.toolbar { height: 58px; background: radial-gradient(circle at 12px 12px, #343b4b 11.500px, #181f2e 12px) 0 0 / 12px 12px no-repeat, radial-gradient(circle at 0 12px, #343b4b 11.500px, #181f2e 12px) 100% 0 / 12px 12px no-repeat, #343b4b; display: flex; align-items: center; color: #c3cbdc; padding-bottom: 1px; }
.nav { display: flex; gap: 29px; width: 150px; padding-left: 19px; }
.nav .off { opacity: .45; }
.omnibox { width: 1486px; height: 42px; border-radius: 21px; background: #1e2636; display: flex; align-items: center; padding-left: 6px; }
.siteinfo { width: 30px; height: 30px; border-radius: 50%; background: #343b4b; display: flex; align-items: center; justify-content: center; margin-right: 10px; color: #dde1ec; }
.url { font-size: 17.500px; letter-spacing: -.37px; color: #c2c6d0; width: 1360px; }
.url b { font-weight: 400; color: #fff; }
.install { margin-right: 18px; }
.shield { margin-left: 23px; }
.puzzle { margin-left: 26px; }
.vsep { width: 2px; height: 20px; background: #4c5567; flex: none; }
.toolbar .vsep { margin-left: 21px; }
.profile { margin-left: 11px; width: 105px; height: 42px; border-radius: 21px; background: #1e477f; color: #d7e5fc; display: flex; align-items: center; padding-left: 13px; gap: 7px; font-size: 15px; letter-spacing: -.3px; }
.profile span { margin-top: -1px; }
.pic { width: 25px; height: 25px; border-radius: 50%; background: #ef6c00; color: #fff; font: 13.500px/25px Roboto; text-align: center; letter-spacing: 0; }
.menu { width: 45px; height: 45px; border: 2px solid #a8c7fa; border-radius: 50%; margin-left: 5px; display: flex; align-items: center; justify-content: center; }
.bookmarks { height: 43px; background: #343b4b; border-bottom: 1px solid #4a4d5a; display: flex; align-items: center; padding: 0 0 9px 15px; color: #c4c7cf; font-size: 15px; }
.bookmarks .vsep { margin: 0 19px 0 20px; }
.bookmarks span { margin-top: -1px; }
.globe { margin-right: 8px; width: 18px; }
.bm1 { width: 114px; letter-spacing: -.3px; }
.ruang { margin-right: 6px; }
.bm2 { letter-spacing: -.34px; }

/* drive */
.app { flex: 1; display: flex; flex-direction: column; background: #f8fafd; --hole: #f8fafd; }
.apphead { height: 79px; padding-bottom: 1px; display: flex; align-items: center; color: #444746; }
.brand { width: 320px; padding-left: 32px; display: flex; align-items: center; gap: 12px; font-size: 28px; }
.brand span { margin-top: -1px; }
.search { width: 902px; height: 59px; margin-top: -1px; border-radius: 30px; background: #e9eef6; display: flex; align-items: center; padding: 0 21px; font-size: 20px; color: #303134; }
.search span { margin: -1px auto 0 20px; letter-spacing: .27px; }
.help { margin-left: 348px; }
.gear { margin: 0 28px 0 25px; }
.account { margin-left: 30px; width: 167px; height: 60px; border: 1px solid #dadce0; border-radius: 10px; background: #fff; display: flex; align-items: center; padding-left: 12px; }
.acct { width: 70px; margin: 0 0 0 6px; font-weight: 700; font-size: 13px; line-height: 13px; color: #111; letter-spacing: .05px; }
.avatar { width: 40px; height: 40px; margin-top: 1px; border-radius: 50%; background: #ef6c00; color: #fff; font-size: 22px; line-height: 40px; text-align: center; }
.body { flex: 1; display: flex; }
.side { width: 321px; padding: 10px 0 0 20px; }
.new { width: 126px; height: 70px; border-radius: 20px; background: #fff; box-shadow: 0 1px 2px rgba(60,64,67,.35), 0 1px 4px 1px rgba(60,64,67,.15); display: flex; align-items: center; padding-left: 25px; gap: 21px; font-size: 17.500px; font-weight: 500; margin-bottom: 20px; }
.new span { margin-top: -2px; letter-spacing: .2px; }
.grp { margin-bottom: 20px; }
.it { height: 40px; display: flex; align-items: center; font-size: 17.500px; }
.it i { width: 23px; height: 8px; flex: none; }
.it .tri { background: linear-gradient(#1f1f1f, #1f1f1f) 14px 0 / 4px 8px no-repeat; clip-path: polygon(14px 0, 18px 4px, 14px 8px); }
.it svg { width: 24px; height: 24px; fill: currentColor; }
.it svg.ppl { width: 23px; height: 17px; margin-left: 1px; }
.it span { margin-left: 18px; letter-spacing: .2px; }
.s { fill: none; stroke: currentColor; stroke-width: 1.900; }
.f { fill: currentColor; }
.meter { width: 209px; height: 5px; margin: -8px 0 0 32px; border-radius: 3px; background: linear-gradient(#f8fafd, #f8fafd) 102px 0 / 2px 6px no-repeat, #bdc1c6; }
.meter b { display: block; width: 102px; height: 5px; border-radius: 3px; background: #0b57d0; position: relative; top: -1px; }
.quota { margin: 15px 0 0 30px; font-size: 15px; line-height: 20px; color: #444746; letter-spacing: .2px; }

.panel { width: 1529px; height: 770px; border-radius: 20px; background: #fff; padding: 0 25px; color: #1f1f1f; }
.crumbs { height: 90px; display: flex; align-items: center; font-size: 30px; color: #444746; }
.chev { fill: none; stroke: #616161; stroke-width: 2; }
.crumbs span { margin-top: -4px; }
.c1 { width: 149px; letter-spacing: .4px; }
.c2 { width: 360px; margin-left: 30px; letter-spacing: .3px; }
.c3 { width: 60px; margin-left: 30px; color: #1f1f1f; letter-spacing: -1.900px; }
.c-caret { color: #1f1f1f; }
.c-people { margin-left: 31px; }
.toggle { margin-left: auto; width: 137px; height: 40px; border: 1px solid #747775; border-radius: 20px; overflow: hidden; display: flex; color: #1f1f1f; }
.toggle div { flex: 1; display: flex; align-items: center; justify-content: center; gap: 9px; }
.toggle .on { background: #c2e7ff; color: #001d35; border-right: 1px solid #747775; }
.info { margin: 0 23px 0 19px; color: #1f1f1f; }
.chips { display: flex; gap: 10px; height: 40px; }
.chip { border: 1px solid #747775; border-radius: 10px; display: flex; align-items: center; justify-content: space-between; padding: 0 18px 0 20px; font-size: 17.500px; font-weight: 500; color: #444746; letter-spacing: .25px; }
.k1 { width: 107px; letter-spacing: 0; } .k2 { width: 123px; } .k3 { width: 140px; } .k4 { width: 124px; }
.row { width: 1479px; display: grid; grid-template-columns: 607px 269px 250px 107px 1fr; align-items: center; border-bottom: 1px solid #c7c7c7; font-size: 17.500px; }
.row > div { display: flex; align-items: center; }
.head { height: 70px; padding-top: 19px; font-weight: 500; }
.name { padding-left: 1px; }
.name span { width: 77px; letter-spacing: .2px; }
.ow { letter-spacing: .75px; }
.lm { letter-spacing: .33px; }
.lm svg { margin-left: 7px; }
.file { height: 60px; color: #444746; }
.fname { padding-left: 26px; color: #1f1f1f; font-weight: 500; }
.title { letter-spacing: .48px; }
.ppt { width: 20px; height: 20px; border-radius: 2px; background: #fbbc04; color: #fff; font-size: 16px; line-height: 20px; text-align: center; margin-right: 25px; }
.fname svg { margin-left: 9px; color: #444746; }
.owner { padding-left: 1px; gap: 11px; }
.when { gap: 6px; }
.when span:first-child { letter-spacing: -.45px; }
.when span:last-child { letter-spacing: .2px; }
.acts { justify-content: flex-end; padding-right: 22px; gap: 21px; color: #1f1f1f; }
.acts svg { width: 24px; height: 24px; fill: currentColor; }
.acts svg .s { fill: none; }
.rail { width: 70px; display: flex; flex-direction: column; align-items: center; padding: 22px 0 0 0; gap: 46px; }
.rail i { width: 25px; height: 1px; background: #e0e2e6; margin: -3px 0 -4px; }
.rail .last { margin-top: 268px; }
.rail .ln { color: #000; margin-top: 2px; }

/* taskbar */
.taskbar { height: 60px; background: linear-gradient(90deg, #241d2b, #251c36); border-top: 1px solid #494353; display: flex; justify-content: space-between; color: #fff; }
.apps { display: flex; padding-left: 465px; }
.t { position: relative; width: 55.080px; height: 59px; padding: 14px 12.500px 0; }
.t > svg { width: 30px; height: 30px; position: relative; }
.t.run::after { content: ""; position: absolute; left: 23.500px; top: 49px; width: 8px; height: 4px; border-radius: 2px; background: #9a96a0; }
.t.act::before { content: ""; position: absolute; left: 2px; top: 4px; width: 50px; height: 50px; border-radius: 5px; background: #37304a; border: 1px solid #403952; }
.t.act::after { left: 17.500px; width: 20px; background: #4cc2ff; }
.badge { position: absolute; left: 29px; top: 8px; width: 20px; height: 20px; border-radius: 50%; background: #33691e; color: #e6efe0; font: 12px/20px Roboto; text-align: center; }
.badge.co { background: #ef6c00; color: #ffd9b8; }
.badge.count { left: 21px; width: 34px; border-radius: 10px; background: #4cc2ff; color: #111; font: 14px/20px "Open Sans"; }
.tray { display: flex; align-items: center; padding: 0 24px 3px 0; font-size: 15px; line-height: 20px; letter-spacing: -.2px; }
.lang { width: 60px; text-align: center; margin: 0 7px 0 10px; }
.wifi { margin-right: 9px; }
.vol { margin-right: 10px; }
.clock { width: 98px; text-align: right; }
```
